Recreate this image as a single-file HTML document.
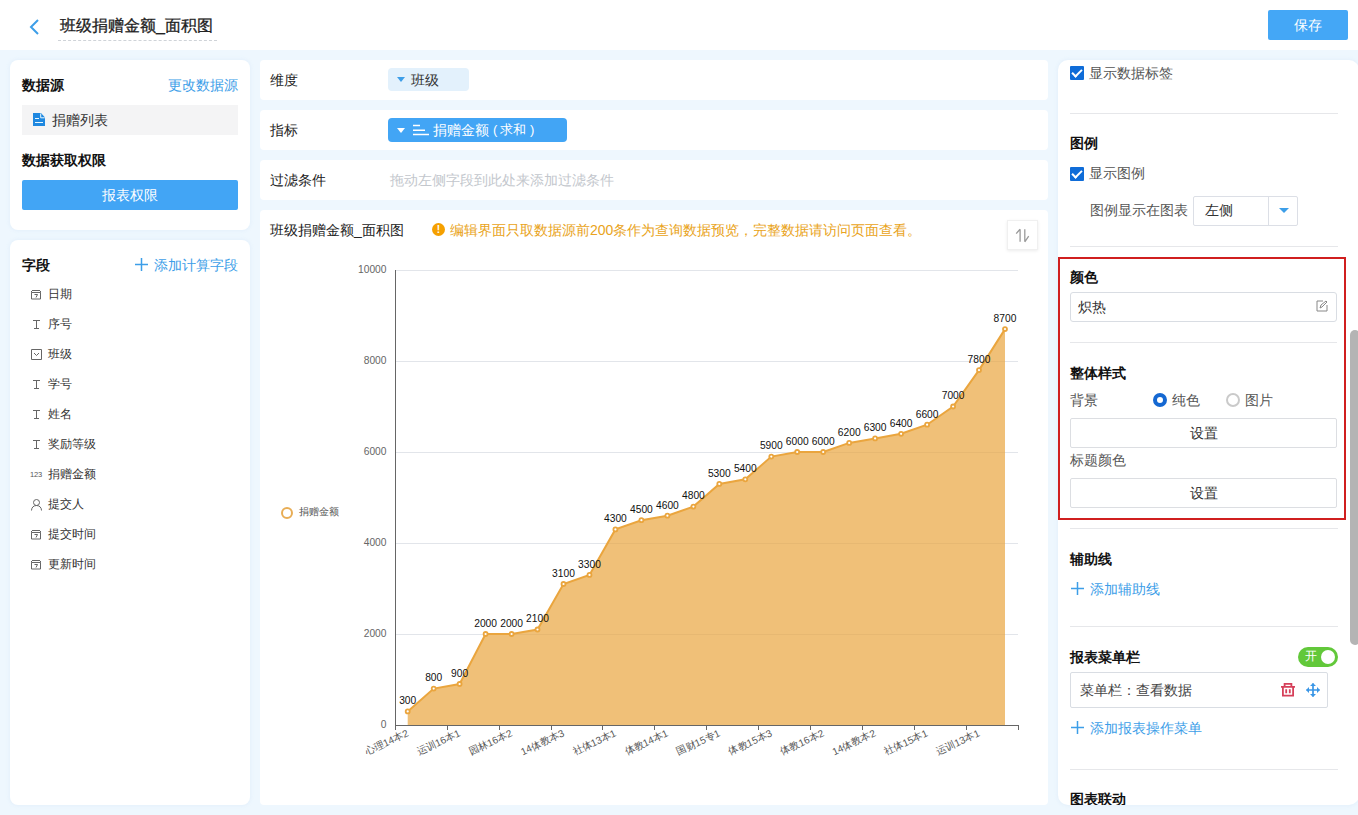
<!DOCTYPE html>
<html><head><meta charset="utf-8">
<style>
*{margin:0;padding:0;box-sizing:border-box}
html,body{width:1358px;height:815px;overflow:hidden}
body{background:#eef7fe;font-family:"Liberation Sans",sans-serif;position:relative;font-size:14px;color:#333}
.a{position:absolute;white-space:nowrap}
.hdr{left:0;top:0;width:1358px;height:50px;background:#fff}
.panel{background:#fff;border-radius:8px;box-shadow:0 0 4px rgba(190,215,240,.3)}
.row{background:#fff;border-radius:4px}
.t14{font-size:14px;line-height:16px}
.t13{font-size:13px;line-height:16px}
.b{font-weight:bold;color:#111}
.blue{color:#3d9ee8}
.divl{height:1px;background:#e6e7ea}
.btn{border:1px solid #dcdee2;border-radius:2px;background:#fff;text-align:center;color:#333}
.chk{width:14px;height:14px;background:#0f6cd8;border-radius:1px}
.chk:after{content:"";position:absolute;left:4px;top:1px;width:4px;height:8px;border:solid #fff;border-width:0 2px 2px 0;transform:rotate(45deg)}
svg text{font-family:"Liberation Sans",sans-serif}
.yl{font-size:11px;fill:#666}
.dl{font-size:11px;fill:#111}
.xl{font-size:10px;fill:#555}
</style></head><body>
<div class="a hdr"></div>
<svg class="a" style="left:28px;top:18px" width="14" height="18" viewBox="0 0 14 18"><polyline points="10,2 3,9 10,16" fill="none" stroke="#3d9ee8" stroke-width="2"/></svg>
<div class="a" style="left:60px;top:17px;font-size:16px;line-height:18px;color:#222;-webkit-text-stroke:0.3px #222">班级捐赠金额_面积图</div>
<div class="a" style="left:58px;top:40px;width:159px;border-top:1px dashed #cfd3d8"></div>
<div class="a" style="left:1268px;top:10px;width:80px;height:30px;background:#44a7f6;border-radius:2px;color:#fff;font-size:14px;line-height:30px;text-align:center">保存</div>

<!-- left panel 1 -->
<div class="a panel" style="left:10px;top:60px;width:240px;height:170px"></div>
<div class="a t14 b" style="left:22px;top:77px">数据源</div>
<div class="a t14 blue" style="left:168px;top:77px">更改数据源</div>
<div class="a" style="left:22px;top:105px;width:216px;height:30px;background:#f4f4f5"></div>
<svg class="a" style="left:33px;top:113px" width="12" height="13" viewBox="0 0 12 13"><path d="M0 0h8l4 4.5V13H0z" fill="#1f88e0"/><path d="M7.7 0.5v4.3h4" fill="none" stroke="#e8f8ff" stroke-width="1"/><path d="M2 5.5h4M2 9.5h8" stroke="#e8f8ff" stroke-width="1.1"/></svg>
<div class="a t14" style="left:52px;top:112px;color:#333">捐赠列表</div>
<div class="a t14 b" style="left:22px;top:152px">数据获取权限</div>
<div class="a" style="left:22px;top:180px;width:216px;height:30px;background:#42a5f5;border-radius:2px;color:#fff;font-size:14px;line-height:30px;text-align:center">报表权限</div>

<!-- left panel 2 -->
<div class="a panel" style="left:10px;top:240px;width:240px;height:565px"></div>
<div class="a t14 b" style="left:22px;top:257px">字段</div>
<svg class="a" style="left:135px;top:258px" width="13" height="13" viewBox="0 0 13 13"><path d="M6.5 0v13M0 6.5h13" stroke="#3d9ee8" stroke-width="1.5"/></svg><div class="a t14 blue" style="left:154px;top:257px">添加计算字段</div>
<svg class="a" style="left:31px;top:290px" width="10" height="10" viewBox="0 0 10 10"><path d="M0.5 1v1.5M9.5 1v1.5M1 0.5h8M0.5 2.5h9v6.5h-9zM3.5 4.5h3l-1.5 3" fill="none" stroke="#666" stroke-width="1"/></svg>
<div class="a" style="left:48px;top:287px;font-size:12px;line-height:14px;color:#333">日期</div>
<svg class="a" style="left:31px;top:319px" width="11" height="11" viewBox="0 0 11 11"><path d="M2 1.5h7M5.5 1.5v8M3 9.5h5" fill="none" stroke="#666" stroke-width="1"/></svg>
<div class="a" style="left:48px;top:317px;font-size:12px;line-height:14px;color:#333">序号</div>
<svg class="a" style="left:31px;top:349px" width="11" height="11" viewBox="0 0 11 11"><path d="M0.5 0.5h10v10h-10zM3 4l2.5 2.5L8 4" fill="none" stroke="#666" stroke-width="1"/></svg>
<div class="a" style="left:48px;top:347px;font-size:12px;line-height:14px;color:#333">班级</div>
<svg class="a" style="left:31px;top:379px" width="11" height="11" viewBox="0 0 11 11"><path d="M2 1.5h7M5.5 1.5v8M3 9.5h5" fill="none" stroke="#666" stroke-width="1"/></svg>
<div class="a" style="left:48px;top:377px;font-size:12px;line-height:14px;color:#333">学号</div>
<svg class="a" style="left:31px;top:409px" width="11" height="11" viewBox="0 0 11 11"><path d="M2 1.5h7M5.5 1.5v8M3 9.5h5" fill="none" stroke="#666" stroke-width="1"/></svg>
<div class="a" style="left:48px;top:407px;font-size:12px;line-height:14px;color:#333">姓名</div>
<svg class="a" style="left:31px;top:439px" width="11" height="11" viewBox="0 0 11 11"><path d="M2 1.5h7M5.5 1.5v8M3 9.5h5" fill="none" stroke="#666" stroke-width="1"/></svg>
<div class="a" style="left:48px;top:437px;font-size:12px;line-height:14px;color:#333">奖励等级</div>
<div class="a" style="left:30px;top:469px;font-size:7.5px;line-height:11px;color:#555;letter-spacing:-0.2px">123</div>
<div class="a" style="left:48px;top:467px;font-size:12px;line-height:14px;color:#333">捐赠金额</div>
<svg class="a" style="left:31px;top:499px" width="11" height="12" viewBox="0 0 11 12"><circle cx="5.5" cy="3.5" r="3" fill="none" stroke="#666" stroke-width="1"/><path d="M0.5 11.5c0-3 2-5 5-5s5 2 5 5" fill="none" stroke="#666" stroke-width="1"/></svg>
<div class="a" style="left:48px;top:497px;font-size:12px;line-height:14px;color:#333">提交人</div>
<svg class="a" style="left:31px;top:530px" width="10" height="10" viewBox="0 0 10 10"><path d="M0.5 1v1.5M9.5 1v1.5M1 0.5h8M0.5 2.5h9v6.5h-9zM3.5 4.5h3l-1.5 3" fill="none" stroke="#666" stroke-width="1"/></svg>
<div class="a" style="left:48px;top:527px;font-size:12px;line-height:14px;color:#333">提交时间</div>
<svg class="a" style="left:31px;top:560px" width="10" height="10" viewBox="0 0 10 10"><path d="M0.5 1v1.5M9.5 1v1.5M1 0.5h8M0.5 2.5h9v6.5h-9zM3.5 4.5h3l-1.5 3" fill="none" stroke="#666" stroke-width="1"/></svg>
<div class="a" style="left:48px;top:557px;font-size:12px;line-height:14px;color:#333">更新时间</div>

<!-- middle rows -->
<div class="a row" style="left:260px;top:60px;width:788px;height:40px"></div>
<div class="a t14" style="left:270px;top:72px;color:#222">维度</div>
<div class="a" style="left:388px;top:68px;width:81px;height:23px;background:#e3f1fc;border-radius:4px"></div>
<div class="a" style="left:397px;top:77px;width:0;height:0;border-left:4px solid transparent;border-right:4px solid transparent;border-top:5px solid #3d9ee8"></div>
<div class="a t14" style="left:411px;top:72px;color:#333">班级</div>

<div class="a row" style="left:260px;top:110px;width:788px;height:40px"></div>
<div class="a t14" style="left:270px;top:122px;color:#222">指标</div>
<div class="a" style="left:388px;top:118px;width:179px;height:24px;background:#42a5f5;border-radius:4px"></div>
<div class="a" style="left:397px;top:128px;width:0;height:0;border-left:4px solid transparent;border-right:4px solid transparent;border-top:5px solid #fff"></div>
<svg class="a" style="left:413px;top:124px" width="17" height="12" viewBox="0 0 17 12"><path d="M0 1.5h7M0 6.2h12M0 10.5h16" stroke="#fff" stroke-width="1.4"/></svg>
<div class="a t14" style="left:433px;top:122px;color:#fff">捐赠金额</div><div class="a t13" style="left:493px;top:122px;color:#fff">(</div><div class="a" style="left:500px;top:123px;color:#fff;font-size:12.5px;line-height:14px">求和</div><div class="a t13" style="left:530px;top:122px;color:#fff">)</div>

<div class="a row" style="left:260px;top:160px;width:788px;height:40px"></div>
<div class="a t14" style="left:270px;top:172px;color:#222">过滤条件</div>
<div class="a t14" style="left:390px;top:172px;color:#c3c7cd">拖动左侧字段到此处来添加过滤条件</div>

<div class="a row" style="left:260px;top:210px;width:788px;height:595px"></div>
<div class="a t14" style="left:270px;top:222px;color:#222">班级捐赠金额_面积图</div>
<div class="a" style="left:432px;top:223px;width:13px;height:13px;border-radius:50%;background:#f5a000;color:#fff;font-size:10px;line-height:13px;text-align:center;font-weight:bold">!</div>
<div class="a t14" style="left:450px;top:222px;color:#e9a320">编辑界面只取数据源前200条作为查询数据预览，完整数据请访问页面查看。</div>
<div class="a" style="left:1007px;top:220px;width:31px;height:30px;background:#fff;border:1px solid #f0f0f0;box-shadow:0 1px 3px rgba(0,0,0,.08)"></div><svg class="a" style="left:1015px;top:228px" width="15" height="15" viewBox="0 0 15 15"><path d="M5.1 1.2v12.6M5.1 1.2L1.2 5.6M9.8 1.2v12.6M9.8 13.8l3.9-5.6" fill="none" stroke="#9a9a9a" stroke-width="1.3"/></svg>
<svg class="a" style="left:0;top:0" width="1358" height="815">
<text x="386.5" y="727.8" text-anchor="end" class="yl" textLength="5.7" lengthAdjust="spacingAndGlyphs">0</text>
<line x1="396" y1="634.5" x2="1018" y2="634.5" stroke="#e2e5ea" stroke-width="1"/>
<text x="386.5" y="636.8" text-anchor="end" class="yl" textLength="22.8" lengthAdjust="spacingAndGlyphs">2000</text>
<line x1="396" y1="543.5" x2="1018" y2="543.5" stroke="#e2e5ea" stroke-width="1"/>
<text x="386.5" y="545.8" text-anchor="end" class="yl" textLength="22.8" lengthAdjust="spacingAndGlyphs">4000</text>
<line x1="396" y1="452.5" x2="1018" y2="452.5" stroke="#e2e5ea" stroke-width="1"/>
<text x="386.5" y="454.8" text-anchor="end" class="yl" textLength="22.8" lengthAdjust="spacingAndGlyphs">6000</text>
<line x1="396" y1="361.5" x2="1018" y2="361.5" stroke="#e2e5ea" stroke-width="1"/>
<text x="386.5" y="363.8" text-anchor="end" class="yl" textLength="22.8" lengthAdjust="spacingAndGlyphs">8000</text>
<line x1="396" y1="270.5" x2="1018" y2="270.5" stroke="#e2e5ea" stroke-width="1"/>
<text x="386.5" y="272.8" text-anchor="end" class="yl" textLength="28.5" lengthAdjust="spacingAndGlyphs">10000</text>
<polygon points="407.7,725 407.7,711.4 433.7,688.6 459.6,684.0 485.6,634.0 511.6,634.0 537.5,629.5 563.5,584.0 589.5,574.9 615.4,529.4 641.4,520.2 667.4,515.7 693.4,506.6 719.3,483.9 745.3,479.3 771.3,456.6 797.2,452.0 823.2,452.0 849.2,442.9 875.1,438.4 901.1,433.8 927.1,424.7 953.1,406.5 979.0,370.1 1005.0,329.1 1005.0,725" fill="#eaa53e" fill-opacity="0.7"/>
<polyline points="407.7,711.4 433.7,688.6 459.6,684.0 485.6,634.0 511.6,634.0 537.5,629.5 563.5,584.0 589.5,574.9 615.4,529.4 641.4,520.2 667.4,515.7 693.4,506.6 719.3,483.9 745.3,479.3 771.3,456.6 797.2,452.0 823.2,452.0 849.2,442.9 875.1,438.4 901.1,433.8 927.1,424.7 953.1,406.5 979.0,370.1 1005.0,329.1" fill="none" stroke="#eaa53e" stroke-width="2"/>
<circle cx="407.7" cy="711.4" r="2" fill="#fff" stroke="#eaa53e" stroke-width="1.8"/>
<circle cx="433.7" cy="688.6" r="2" fill="#fff" stroke="#eaa53e" stroke-width="1.8"/>
<circle cx="459.6" cy="684.0" r="2" fill="#fff" stroke="#eaa53e" stroke-width="1.8"/>
<circle cx="485.6" cy="634.0" r="2" fill="#fff" stroke="#eaa53e" stroke-width="1.8"/>
<circle cx="511.6" cy="634.0" r="2" fill="#fff" stroke="#eaa53e" stroke-width="1.8"/>
<circle cx="537.5" cy="629.5" r="2" fill="#fff" stroke="#eaa53e" stroke-width="1.8"/>
<circle cx="563.5" cy="584.0" r="2" fill="#fff" stroke="#eaa53e" stroke-width="1.8"/>
<circle cx="589.5" cy="574.9" r="2" fill="#fff" stroke="#eaa53e" stroke-width="1.8"/>
<circle cx="615.4" cy="529.4" r="2" fill="#fff" stroke="#eaa53e" stroke-width="1.8"/>
<circle cx="641.4" cy="520.2" r="2" fill="#fff" stroke="#eaa53e" stroke-width="1.8"/>
<circle cx="667.4" cy="515.7" r="2" fill="#fff" stroke="#eaa53e" stroke-width="1.8"/>
<circle cx="693.4" cy="506.6" r="2" fill="#fff" stroke="#eaa53e" stroke-width="1.8"/>
<circle cx="719.3" cy="483.9" r="2" fill="#fff" stroke="#eaa53e" stroke-width="1.8"/>
<circle cx="745.3" cy="479.3" r="2" fill="#fff" stroke="#eaa53e" stroke-width="1.8"/>
<circle cx="771.3" cy="456.6" r="2" fill="#fff" stroke="#eaa53e" stroke-width="1.8"/>
<circle cx="797.2" cy="452.0" r="2" fill="#fff" stroke="#eaa53e" stroke-width="1.8"/>
<circle cx="823.2" cy="452.0" r="2" fill="#fff" stroke="#eaa53e" stroke-width="1.8"/>
<circle cx="849.2" cy="442.9" r="2" fill="#fff" stroke="#eaa53e" stroke-width="1.8"/>
<circle cx="875.1" cy="438.4" r="2" fill="#fff" stroke="#eaa53e" stroke-width="1.8"/>
<circle cx="901.1" cy="433.8" r="2" fill="#fff" stroke="#eaa53e" stroke-width="1.8"/>
<circle cx="927.1" cy="424.7" r="2" fill="#fff" stroke="#eaa53e" stroke-width="1.8"/>
<circle cx="953.1" cy="406.5" r="2" fill="#fff" stroke="#eaa53e" stroke-width="1.8"/>
<circle cx="979.0" cy="370.1" r="2" fill="#fff" stroke="#eaa53e" stroke-width="1.8"/>
<circle cx="1005.0" cy="329.1" r="2" fill="#fff" stroke="#eaa53e" stroke-width="1.8"/>
<text x="407.7" y="704.1" text-anchor="middle" class="dl" textLength="17.1" lengthAdjust="spacingAndGlyphs">300</text>
<text x="433.7" y="681.4" text-anchor="middle" class="dl" textLength="17.1" lengthAdjust="spacingAndGlyphs">800</text>
<text x="459.6" y="676.8" text-anchor="middle" class="dl" textLength="17.1" lengthAdjust="spacingAndGlyphs">900</text>
<text x="485.6" y="626.8" text-anchor="middle" class="dl" textLength="22.8" lengthAdjust="spacingAndGlyphs">2000</text>
<text x="511.6" y="626.8" text-anchor="middle" class="dl" textLength="22.8" lengthAdjust="spacingAndGlyphs">2000</text>
<text x="537.5" y="622.2" text-anchor="middle" class="dl" textLength="22.8" lengthAdjust="spacingAndGlyphs">2100</text>
<text x="563.5" y="576.8" text-anchor="middle" class="dl" textLength="22.8" lengthAdjust="spacingAndGlyphs">3100</text>
<text x="589.5" y="567.6" text-anchor="middle" class="dl" textLength="22.8" lengthAdjust="spacingAndGlyphs">3300</text>
<text x="615.4" y="522.1" text-anchor="middle" class="dl" textLength="22.8" lengthAdjust="spacingAndGlyphs">4300</text>
<text x="641.4" y="513.0" text-anchor="middle" class="dl" textLength="22.8" lengthAdjust="spacingAndGlyphs">4500</text>
<text x="667.4" y="508.5" text-anchor="middle" class="dl" textLength="22.8" lengthAdjust="spacingAndGlyphs">4600</text>
<text x="693.4" y="499.4" text-anchor="middle" class="dl" textLength="22.8" lengthAdjust="spacingAndGlyphs">4800</text>
<text x="719.3" y="476.7" text-anchor="middle" class="dl" textLength="22.8" lengthAdjust="spacingAndGlyphs">5300</text>
<text x="745.3" y="472.1" text-anchor="middle" class="dl" textLength="22.8" lengthAdjust="spacingAndGlyphs">5400</text>
<text x="771.3" y="449.4" text-anchor="middle" class="dl" textLength="22.8" lengthAdjust="spacingAndGlyphs">5900</text>
<text x="797.2" y="444.8" text-anchor="middle" class="dl" textLength="22.8" lengthAdjust="spacingAndGlyphs">6000</text>
<text x="823.2" y="444.8" text-anchor="middle" class="dl" textLength="22.8" lengthAdjust="spacingAndGlyphs">6000</text>
<text x="849.2" y="435.7" text-anchor="middle" class="dl" textLength="22.8" lengthAdjust="spacingAndGlyphs">6200</text>
<text x="875.1" y="431.2" text-anchor="middle" class="dl" textLength="22.8" lengthAdjust="spacingAndGlyphs">6300</text>
<text x="901.1" y="426.6" text-anchor="middle" class="dl" textLength="22.8" lengthAdjust="spacingAndGlyphs">6400</text>
<text x="927.1" y="417.5" text-anchor="middle" class="dl" textLength="22.8" lengthAdjust="spacingAndGlyphs">6600</text>
<text x="953.1" y="399.3" text-anchor="middle" class="dl" textLength="22.8" lengthAdjust="spacingAndGlyphs">7000</text>
<text x="979.0" y="362.9" text-anchor="middle" class="dl" textLength="22.8" lengthAdjust="spacingAndGlyphs">7800</text>
<text x="1005.0" y="321.9" text-anchor="middle" class="dl" textLength="22.8" lengthAdjust="spacingAndGlyphs">8700</text>
<line x1="395.5" y1="270" x2="395.5" y2="726" stroke="#666" stroke-width="1"/>
<line x1="395" y1="725.5" x2="1019" y2="725.5" stroke="#666" stroke-width="1"/>
<line x1="395.5" y1="725" x2="395.5" y2="730" stroke="#666" stroke-width="1"/>
<line x1="447.5" y1="725" x2="447.5" y2="730" stroke="#666" stroke-width="1"/>
<line x1="499.5" y1="725" x2="499.5" y2="730" stroke="#666" stroke-width="1"/>
<line x1="551.5" y1="725" x2="551.5" y2="730" stroke="#666" stroke-width="1"/>
<line x1="602.5" y1="725" x2="602.5" y2="730" stroke="#666" stroke-width="1"/>
<line x1="654.5" y1="725" x2="654.5" y2="730" stroke="#666" stroke-width="1"/>
<line x1="706.5" y1="725" x2="706.5" y2="730" stroke="#666" stroke-width="1"/>
<line x1="758.5" y1="725" x2="758.5" y2="730" stroke="#666" stroke-width="1"/>
<line x1="810.5" y1="725" x2="810.5" y2="730" stroke="#666" stroke-width="1"/>
<line x1="862.5" y1="725" x2="862.5" y2="730" stroke="#666" stroke-width="1"/>
<line x1="914.5" y1="725" x2="914.5" y2="730" stroke="#666" stroke-width="1"/>
<line x1="966.5" y1="725" x2="966.5" y2="730" stroke="#666" stroke-width="1"/>
<line x1="1018.5" y1="725" x2="1018.5" y2="730" stroke="#666" stroke-width="1"/>
<text transform="translate(407.7,732.5) rotate(-25)" text-anchor="end" class="xl" dy="0.35em">心理14本2</text>
<text transform="translate(459.6,732.5) rotate(-25)" text-anchor="end" class="xl" dy="0.35em">运训16本1</text>
<text transform="translate(511.6,732.5) rotate(-25)" text-anchor="end" class="xl" dy="0.35em">园林16本2</text>
<text transform="translate(563.5,732.5) rotate(-25)" text-anchor="end" class="xl" dy="0.35em">14体教本3</text>
<text transform="translate(615.4,732.5) rotate(-25)" text-anchor="end" class="xl" dy="0.35em">社体13本1</text>
<text transform="translate(667.4,732.5) rotate(-25)" text-anchor="end" class="xl" dy="0.35em">体教14本1</text>
<text transform="translate(719.3,732.5) rotate(-25)" text-anchor="end" class="xl" dy="0.35em">国财15专1</text>
<text transform="translate(771.3,732.5) rotate(-25)" text-anchor="end" class="xl" dy="0.35em">体教15本3</text>
<text transform="translate(823.2,732.5) rotate(-25)" text-anchor="end" class="xl" dy="0.35em">体教16本2</text>
<text transform="translate(875.1,732.5) rotate(-25)" text-anchor="end" class="xl" dy="0.35em">14体教本2</text>
<text transform="translate(927.1,732.5) rotate(-25)" text-anchor="end" class="xl" dy="0.35em">社体15本1</text>
<text transform="translate(979.0,732.5) rotate(-25)" text-anchor="end" class="xl" dy="0.35em">运训13本1</text>
</svg>
<div class="a" style="left:281px;top:506.5px;width:12px;height:12px;border:2px solid #e8ad55;border-radius:50%"></div>
<div class="a" style="left:299px;top:505px;font-size:10.2px;line-height:14px;color:#555">捐赠金额</div>

<!-- right panel -->
<div class="a panel" style="left:1058px;top:60px;width:301px;height:745px;border-radius:10px"></div>
<div class="a chk" style="left:1070px;top:66px"></div>
<div class="a t14" style="left:1089px;top:65px;color:#555">显示数据标签</div>
<div class="a divl" style="left:1070px;top:113px;width:268px"></div>
<div class="a t14 b" style="left:1070px;top:135px">图例</div>
<div class="a chk" style="left:1070px;top:167px"></div>
<div class="a t14" style="left:1089px;top:165px;color:#555">显示图例</div>
<div class="a t14" style="left:1090px;top:202px;color:#555">图例显示在图表</div>
<div class="a" style="left:1193px;top:196px;width:105px;height:30px;border:1px solid #dcdfe6;border-radius:2px"></div>
<div class="a" style="left:1268px;top:197px;width:1px;height:28px;background:#dcdfe6"></div>
<div class="a t14" style="left:1205px;top:202px;color:#333">左侧</div>
<div class="a" style="left:1279px;top:208px;width:0;height:0;border-left:5px solid transparent;border-right:5px solid transparent;border-top:5px solid #3d9ee8"></div>
<div class="a divl" style="left:1070px;top:246px;width:268px"></div>

<div class="a t14 b" style="left:1070px;top:269px">颜色</div>
<div class="a" style="left:1070px;top:292px;width:267px;height:30px;border:1px solid #d9dde3;border-radius:3px"></div>
<div class="a t14" style="left:1078px;top:299px;color:#333">炽热</div>
<svg class="a" style="left:1316px;top:300px" width="12" height="12" viewBox="0 0 12 12"><path d="M1 1h6M1 1v10h10V5" fill="none" stroke="#888" stroke-width="1"/><path d="M4 8l1-3 5-4 1 1-5 5z" fill="none" stroke="#888" stroke-width="1"/></svg>
<div class="a divl" style="left:1070px;top:342px;width:267px"></div>
<div class="a t14 b" style="left:1070px;top:365px">整体样式</div>
<div class="a t14" style="left:1070px;top:392px;color:#555">背景</div>
<div class="a" style="left:1153px;top:393px;width:14px;height:14px;border-radius:50%;border:4px solid #1568d2;background:#fff"></div>
<div class="a t14" style="left:1172px;top:392px;color:#555">纯色</div>
<div class="a" style="left:1226px;top:393px;width:14px;height:14px;border-radius:50%;border:2px solid #cacaca;background:#fff"></div>
<div class="a t14" style="left:1245px;top:392px;color:#555">图片</div>
<div class="a btn t14" style="left:1070px;top:418px;width:267px;height:30px;line-height:28px">设置</div>
<div class="a t14" style="left:1070px;top:452px;color:#555">标题颜色</div>
<div class="a btn t14" style="left:1070px;top:478px;width:267px;height:30px;line-height:28px">设置</div>
<div class="a" style="left:1058px;top:257px;width:288px;height:263px;border:2px solid #d01f1f"></div>
<div class="a divl" style="left:1070px;top:528px;width:268px"></div>

<div class="a t14 b" style="left:1070px;top:551px">辅助线</div>
<svg class="a" style="left:1071px;top:582px" width="13" height="13" viewBox="0 0 13 13"><path d="M6.5 0v13M0 6.5h13" stroke="#3d9ee8" stroke-width="1.5"/></svg><div class="a t14 blue" style="left:1090px;top:581px">添加辅助线</div>
<div class="a divl" style="left:1070px;top:626px;width:268px"></div>
<div class="a t14 b" style="left:1070px;top:649px">报表菜单栏</div>
<div class="a" style="left:1298px;top:647px;width:40px;height:20px;background:#62c83a;border-radius:10px"></div>
<div class="a" style="left:1321px;top:650px;width:14px;height:14px;background:#fff;border-radius:50%"></div>
<div class="a" style="left:1305px;top:649px;font-size:12px;line-height:14px;color:#fff">开</div>
<div class="a" style="left:1070px;top:672px;width:258px;height:36px;border:1px solid #d9dde3;border-radius:2px"></div>
<div class="a t14" style="left:1080px;top:682px;color:#444">菜单栏：查看数据</div>
<svg class="a" style="left:1281px;top:682px" width="14" height="15" viewBox="0 0 14 15"><path d="M3.6 4V1.8h6.8V4M0 4.8h14M1.9 4.8V13.7h10.2V4.8M5.2 7.2v4M8.8 7.2v4" fill="none" stroke="#d6405a" stroke-width="1.8"/></svg>
<svg class="a" style="left:1306px;top:683px" width="14" height="14" viewBox="0 0 14 14"><path d="M7 0.5v13M0.5 7h13" stroke="#3a96e6" stroke-width="1.7"/><path d="M7 0l3 3H4zM7 14l3-3H4zM0 7l3 3V4zM14 7l-3 3V4z" fill="#3a96e6"/></svg>
<svg class="a" style="left:1071px;top:721px" width="13" height="13" viewBox="0 0 13 13"><path d="M6.5 0v13M0 6.5h13" stroke="#3d9ee8" stroke-width="1.5"/></svg><div class="a t14 blue" style="left:1090px;top:720px">添加报表操作菜单</div>
<div class="a divl" style="left:1070px;top:769px;width:268px"></div>
<div class="a" style="left:1058px;top:780px;width:292px;height:25px;overflow:hidden"><div class="a t14 b" style="left:12px;top:11px">图表联动</div></div>
<div class="a" style="left:1350px;top:330px;width:10px;height:315px;background:#b4b4b4;border-radius:5px"></div>
</body></html>
